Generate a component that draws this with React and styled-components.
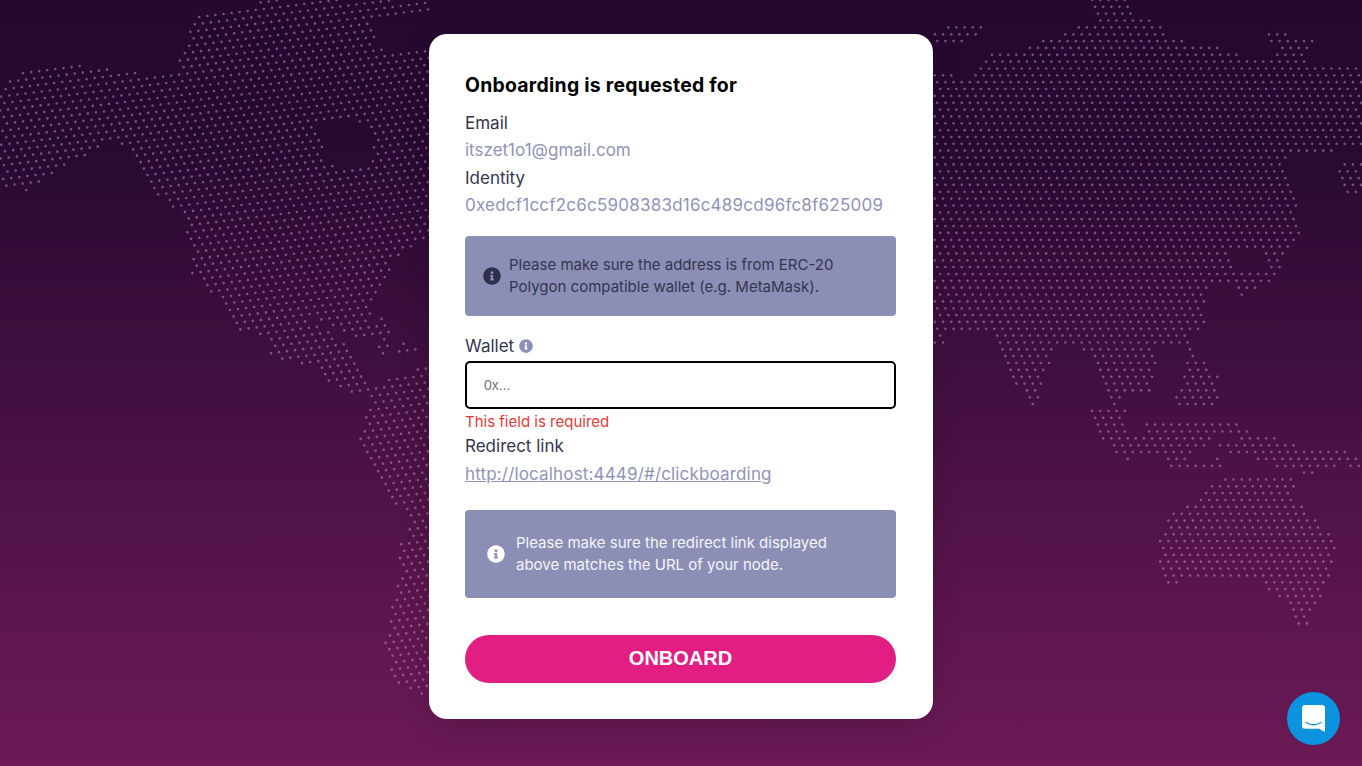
import React from "react";
import styled, { createGlobalStyle } from "styled-components";
import { FaInfoCircle } from "react-icons/fa";

const GlobalStyle = createGlobalStyle`
  * { box-sizing: border-box; }
  html, body { margin: 0; padding: 0; }
  body { font-family: Inter, "Open Sans", sans-serif; }
`;

const Page = styled.div`
  position: relative;
  height: 766px;
  overflow: hidden;
  display: flex;
  justify-content: center;
  align-items: flex-start;
  padding-top: 34px;
  background: linear-gradient(180deg, #250830 0%, #260931 18%, #6d1a57 100%);
`;

const MapLayer = styled.svg`
  position: absolute;
  inset: 0;
  width: 100%;
  height: 100%;
`;

const Card = styled.main`
  position: relative;
  width: 504px;
  height: 685px;
  padding: 36px 37px 36px 36px;
  background: #fff;
  border-radius: 18px;
  box-shadow: 0 10px 30px rgba(0, 0, 0, 0.14);
`;

const Title = styled.h1`
  margin: 0 0 10px;
  height: 30px;
  font-size: 19.4px;
  line-height: 30px;
  font-weight: 700;
  letter-spacing: 0.26px;
  color: #000;
`;

const Label = styled.div`
  display: flex;
  align-items: center;
  gap: 5px;
  font-size: 17px;
  line-height: 27.4px;
  color: #35354f;
`;

const Value = styled.div`
  font-size: 17px;
  line-height: 27.4px;
  color: #8f93b9;
  letter-spacing: ${p => p.$spacing || "0"};
`;

const LinkValue = styled.a`
  display: block;
  margin-top: 1px;
  font-size: 17px;
  line-height: 27.4px;
  letter-spacing: 0.16px;
  color: #8f93b9;
  text-decoration: underline;
`;

const Notice = styled.div`
  display: flex;
  align-items: center;
  height: ${p => p.$height}px;
  margin-top: ${p => p.$top}px;
  padding-left: ${p => p.$inset}px;
  gap: ${p => p.$gap}px;
  border-radius: 4px;
  background: #8b8fb5;
  color: ${p => p.$color};
  font-size: 15px;
  line-height: 22px;

  svg { flex: none; }
`;

const Field = styled.div`
  margin-top: 17px;
`;

const Input = styled.input`
  display: block;
  width: 100%;
  height: 48px;
  margin-top: 1px;
  padding: 0 17px;
  border: 2px solid #000;
  border-radius: 5px;
  outline: none;
  font-family: "Liberation Sans", Arial, sans-serif;
  font-size: 14px;

  &::placeholder { color: #757575; }
`;

const ErrorText = styled.div`
  margin-top: 1px;
  font-size: 15px;
  line-height: 23px;
  color: #e53935;
`;

const Submit = styled.button`
  display: block;
  width: 100%;
  height: 48px;
  margin-top: 37px;
  border: none;
  border-radius: 24px;
  background: #e31e83;
  color: #fff;
  font-family: "Liberation Sans", Arial, sans-serif;
  font-size: 20px;
  font-weight: 700;
`;

const ChatBubble = styled.div`
  position: absolute;
  right: 22px;
  bottom: 21px;
  width: 53px;
  height: 53px;
  display: flex;
  align-items: center;
  justify-content: center;
  border-radius: 50%;
  background: #0b93e0;
  box-shadow: 0 1px 6px rgba(0, 0, 0, 0.08);
`;

// land outlines, traced in page pixels
const leftLand = [
    [[0, 88], [25, 66], [90, 66], [125, 73], [170, 73], [178, 68], [184, 42], [200, 14], [235, 8], [270, 0], [430, 0], [430, 238], [413, 248], [393, 262], [383, 284], [373, 300], [224, 300], [205, 290], [190, 270], [190, 240], [180, 215], [150, 190], [130, 150], [110, 140], [70, 165], [30, 190], [0, 192]],
    [[224, 299], [303, 299], [303, 312], [312, 325], [333, 331], [345, 345], [357, 363], [372, 392], [347, 395], [328, 380], [312, 366], [288, 363], [272, 356], [263, 336], [238, 330]],
    [[303, 299], [373, 299], [373, 340], [357, 340], [340, 328], [303, 312]],
    [[376, 318], [390, 318], [389, 357], [379, 355]],
    [[396, 343], [422, 343], [422, 355], [396, 355]],
    [[430, 368], [400, 372], [385, 380], [363, 390], [370, 407], [357, 440], [363, 456], [392, 500], [408, 520], [410, 540], [398, 545], [400, 580], [392, 600], [385, 645], [393, 680], [410, 692], [430, 700]],
    [[321, 424], [327, 424], [327, 436], [323, 436]],
];

const leftHoles = [
    [[317, 125], [345, 118], [373, 130], [373, 160], [345, 168], [325, 160]],
    [[375, 48], [373, 18], [430, 15], [430, 45], [410, 50]],
];

const rightLand = [
    [[925, 67], [950, 72], [967, 80], [980, 67], [993, 48], [1023, 50], [1033, 43], [1060, 35], [1073, 28], [1097, 20], [1090, 0], [1130, 0], [1133, 15], [1160, 22], [1170, 38], [1193, 42], [1223, 47], [1235, 53], [1245, 60], [1277, 60], [1277, 47], [1262, 40], [1267, 32], [1323, 37], [1300, 60], [1320, 63], [1323, 68], [1362, 68], [1362, 150], [1343, 150], [1287, 157], [1280, 163], [1297, 197], [1295, 220], [1307, 232], [1297, 240], [1283, 260], [1277, 277], [1257, 287], [1240, 298], [1230, 285], [1212, 285], [1205, 290], [1205, 335], [1190, 335], [1190, 345], [1218, 375], [1220, 405], [1197, 410], [1170, 408], [1180, 385], [1190, 350], [1157, 345], [1155, 370], [1150, 395], [1125, 397], [1118, 407], [1108, 402], [1103, 385], [1097, 365], [1083, 352], [1060, 341], [1055, 350], [1040, 395], [1035, 410], [1030, 405], [1015, 385], [1002, 350], [988, 333], [948, 332], [945, 345], [925, 347]],
    [[933, 33], [960, 21], [988, 23], [977, 37], [940, 47]],
    [[1337, 160], [1362, 160], [1362, 190], [1345, 198], [1340, 198]],
    [[1087, 406], [1124, 406], [1128, 420], [1128, 434], [1212, 436], [1212, 446], [1202, 449], [1182, 462], [1150, 456], [1128, 460], [1110, 450], [1104, 440], [1092, 420]],
    [[1142, 418], [1232, 418], [1248, 427], [1247, 436], [1142, 436]],
    [[1242, 438], [1277, 438], [1299, 446], [1345, 452], [1362, 460], [1362, 472], [1340, 465], [1320, 470], [1316, 478], [1290, 470], [1255, 460], [1217, 450], [1217, 445]],
    [[1170, 463], [1222, 458], [1222, 470], [1170, 470]],
    [[1230, 474], [1283, 474], [1297, 482], [1293, 497], [1307, 508], [1317, 522], [1337, 535], [1335, 563], [1327, 582], [1322, 595], [1312, 613], [1305, 628], [1290, 620], [1288, 607], [1270, 593], [1257, 580], [1207, 578], [1167, 584], [1157, 552], [1168, 513], [1187, 507], [1200, 500], [1213, 483]],
];

const rightHoles = [
    [[1230, 247], [1267, 247], [1263, 270], [1232, 272]],
];

function inside(poly, x, y) {
    let hit = false;
    for (let i = 0, j = poly.length - 1; i < poly.length; j = i++) {
        const [xi, yi] = poly[i];
        const [xj, yj] = poly[j];
        if (yi > y !== yj > y && x < ((xj - xi) * (y - yi)) / (yj - yi) + xi) hit = !hit;
    }
    return hit;
}

function dotsFor(land, holes, angle) {
    const cos = Math.cos(angle);
    const sin = Math.sin(angle);
    const r = 1.35;
    let d = "";
    for (let row = -120; row < 240; row++) {
        const shift = ((row % 3) + 3) % 3 * 2.9;
        for (let col = -120; col < 300; col++) {
            const gx = col * 8.15 + shift;
            const gy = row * 6.85;
            const x = gx * cos - gy * sin;
            const y = gx * sin + gy * cos;
            if (x < -4 || x > 1366 || y < -4 || y > 770) continue;
            if (!land.some(p => inside(p, x, y)) || holes.some(p => inside(p, x, y))) continue;
            d += `M${(x - r).toFixed(1)} ${y.toFixed(1)}a${r} ${r} 0 1 0 ${2 * r} 0a${r} ${r} 0 1 0 ${-2 * r} 0`;
        }
    }
    return d;
}

const leftDots = dotsFor(leftLand, leftHoles, (-7 * Math.PI) / 180);
const rightDots = dotsFor(rightLand, rightHoles, 0);

function WorldMap() {
    return (
        <MapLayer viewBox="0 0 1362 766" aria-hidden="true">
            <path d={leftDots} fill="#d9a0d9" fillOpacity="0.45" />
            <path d={rightDots} fill="#d9a0d9" fillOpacity="0.45" />
        </MapLayer>
    );
}

function ChatIcon() {
    return (
        <svg width="23" height="27" viewBox="0 0 23 27" aria-hidden="true">
            <path fill="#fff" d="M3 0h17a3 3 0 0 1 3 3v24l-6-3.200H3a3 3 0 0 1-3-3V3a3 3 0 0 1 3-3z" />
            <path d="M4 17.500c4.500 2.800 10.500 2.800 15 0" fill="none" stroke="#0b93e0" strokeWidth="1.400" strokeLinecap="round" />
        </svg>
    );
}

export default function App() {
    return (
        <>
            <GlobalStyle />
            <Page>
                <WorldMap />
                <Card>
                    <Title>Onboarding is requested for</Title>
                    <Label>Email</Label>
                    <Value>itszet1o1@gmail.com</Value>
                    <Label>Identity</Label>
                    <Value $spacing="0.22px">0xedcf1ccf2c6c5908383d16c489cd96fc8f625009</Value>
                    <Notice $height={80} $top={16} $inset={18} $gap={8} $color="#35354f">
                        <FaInfoCircle size={18} color="#2f2f4b" />
                        <span>
                            Please make sure the address is from ERC-20
                            <br />
                            Polygon compatible wallet (e.g. MetaMask).
                        </span>
                    </Notice>
                    <Field>
                        <Label>
                            Wallet
                            <FaInfoCircle size={14} color="#8b8fb5" />
                        </Label>
                        <Input placeholder="0x..." />
                        <ErrorText>This field is required</ErrorText>
                        <Label>Redirect link</Label>
                        <LinkValue>http://localhost:4449/#/clickboarding</LinkValue>
                    </Field>
                    <Notice $height={88} $top={21} $inset={22} $gap={11} $color="#f4f4f9">
                        <FaInfoCircle size={18} color="#fff" />
                        <span>
                            Please make sure the redirect link displayed
                            <br />
                            above matches the URL of your node.
                        </span>
                    </Notice>
                    <Submit>ONBOARD</Submit>
                </Card>
                <ChatBubble>
                    <ChatIcon />
                </ChatBubble>
            </Page>
        </>
    );
}
